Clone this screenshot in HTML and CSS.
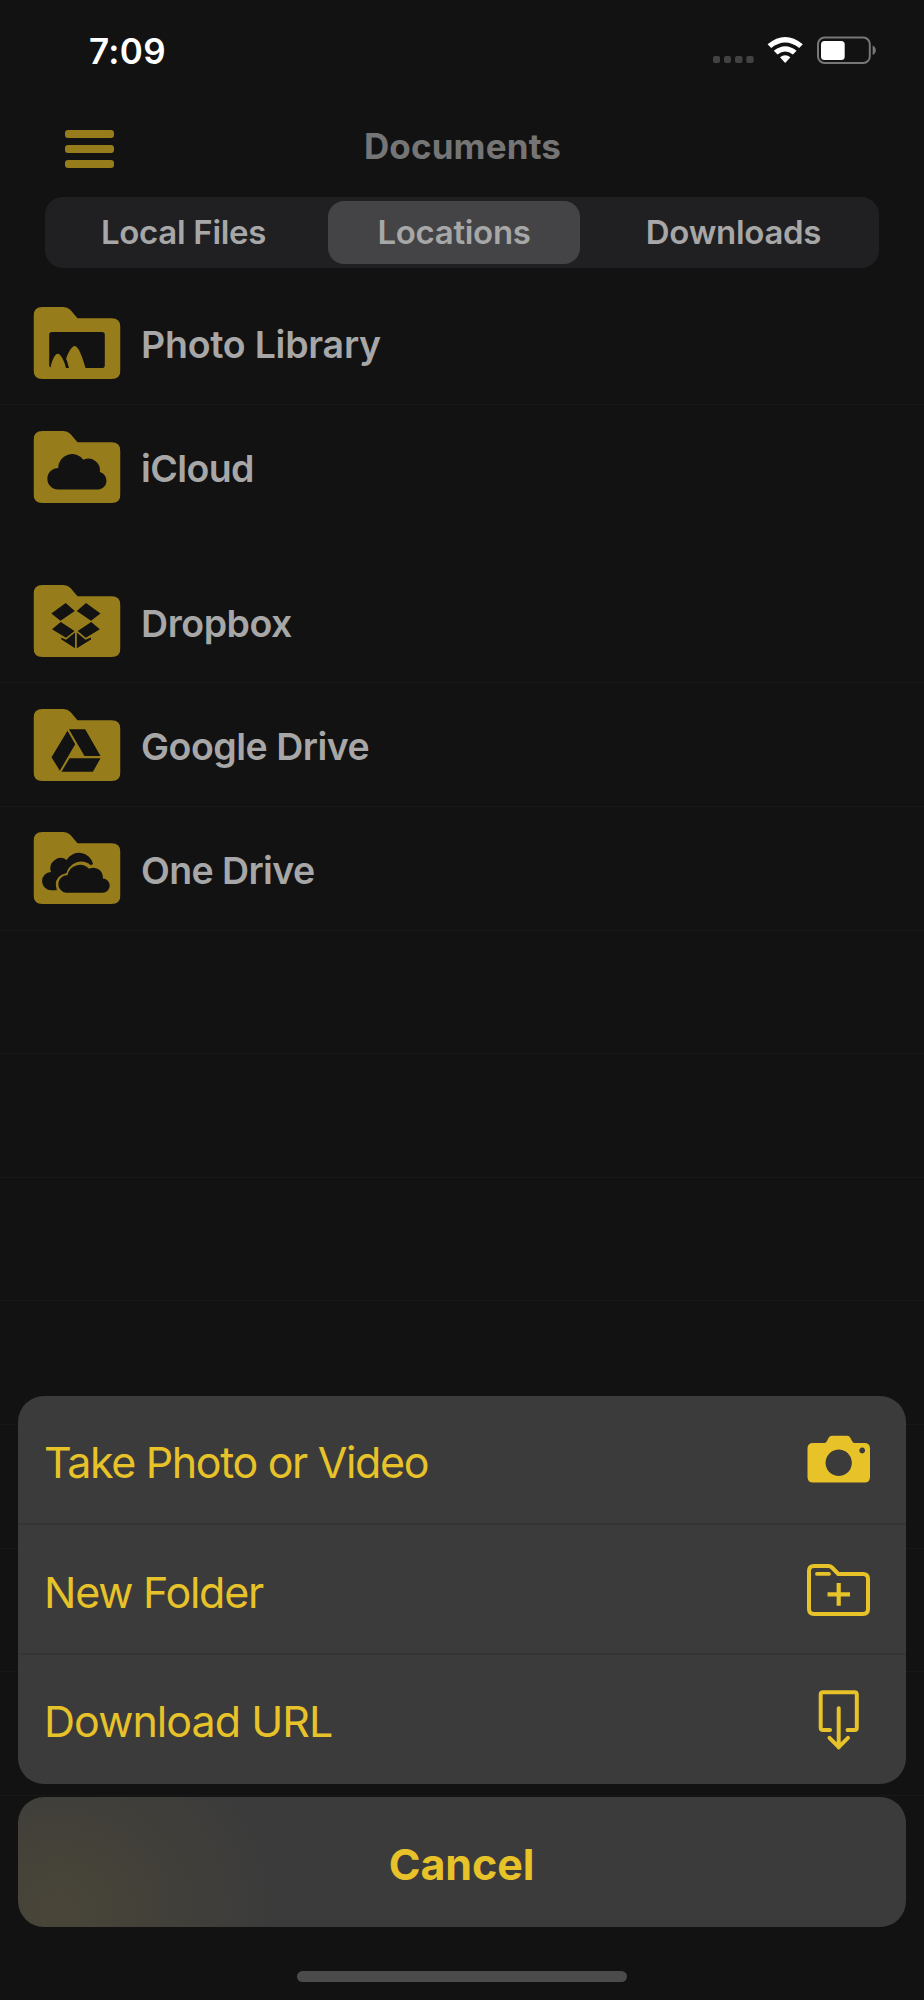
FILE: index.html
```html
<!DOCTYPE html>
<html lang="en">
<head>
<meta charset="utf-8">
<title>Documents</title>
<link rel="stylesheet" href="styles.css">
</head>
<body>
<svg class="defs" width="0" height="0" aria-hidden="true">
  <symbol id="folder" viewBox="0 0 87 72">
    <path d="M9 0H30Q34 0 37 3L44 11.300H78Q87 11.300 87 20.300V63Q87 72 78 72H9Q0 72 0 63V9Q0 0 9 0Z"/>
  </symbol>
</svg>
<div class="screen">
  <header class="status">
    <span class="time">7:09</span>
    <svg class="status-icons" viewBox="0 0 166 30">
      <g fill="#424242">
        <rect x="1" y="21" width="7" height="7" rx="2"/><rect x="12" y="21" width="7" height="7" rx="2"/><rect x="23" y="21" width="7.500" height="7" rx="2"/><rect x="34.200" y="21" width="7.500" height="7" rx="2"/>
      </g>
      <g fill="#fff">
        <path d="M55.600 9.300Q73.200-5.300 90.800 9.300L87.200 13.100Q73.200 2.100 59.200 13.100Z"/>
        <path d="M61.800 15.800Q73.200 6.600 84.600 15.800L80.900 19.600Q73.200 13.600 65.500 19.600Z"/>
        <path d="M68 22.300Q73.200 18.300 78.400 22.300L73.200 28Z"/>
        <rect x="109" y="6" width="23.700" height="19" rx="3.500"/>
      </g>
      <rect x="106" y="2.600" width="51.800" height="25.300" rx="6.500" fill="none" stroke="#777" stroke-width="2"/>
      <path d="M160.600 10.500Q163.800 12 163.800 15.300T160.600 20.100Z" fill="#777"/>
    </svg>
  </header>
  <nav class="bar">
    <div class="menu"><i></i><i></i><i></i></div>
    <h1 class="title">Documents</h1>
  </nav>
  <div class="segments">
    <div class="segment first"><span>Local Files</span></div>
    <div class="segment selected"><span>Locations</span></div>
    <div class="segment"><span>Downloads</span></div>
  </div>
  <main class="list">
    <section class="group">
      <div class="row">
        <svg class="icon" viewBox="0 0 87 72"><use href="#folder"/>
          <path class="cut" d="M18.500 25H68.500Q71.300 25 71.300 27.800V58.200Q71.300 61 68.500 61H52C49 50 45 39 41.200 39C38.300 39 34.300 46 32.600 52C34 54 34.500 58 35.500 61H32.500C30.500 53 27 46.800 24.300 46.800C21 46.800 18.500 54 17 60.600Q15.700 60 15.700 58.200V27.800Q15.700 25 18.500 25Z"/></svg>
        <span class="label l-photo">Photo Library</span>
      </div>
      <div class="row">
        <svg class="icon" viewBox="0 0 87 72"><use href="#folder"/>
          <path class="cut" d="M24.500 58.500A10.750 10.750 0 0 1 24.700 37A14 14 0 0 1 50 28.700A11.600 11.600 0 0 1 66.300 41A8.900 8.900 0 0 1 64.800 58.500Z"/></svg>
        <span class="label">iCloud</span>
      </div>
    </section>
    <section class="group">
      <div class="row">
        <svg class="icon" viewBox="0 0 87 72"><use href="#folder"/>
          <path class="cut" d="M17.800 28.500L32.200 18L41.300 26L27 35.700ZM43.300 26L52.500 18L67 28.500L57.500 35.700ZM18.500 44.300L27.300 37L41 46L32.500 52.800ZM44.200 46L57.700 37L66.300 44.300L52.300 52.800ZM27.300 52.500L32.600 54.700L41.500 47.500V63.300L28 54.500ZM43.300 47.500L52 54.700L57.500 52.500V54.500L43.300 63.300Z"/></svg>
        <span class="label l-dropbox">Dropbox</span>
      </div>
      <div class="row">
        <svg class="icon" viewBox="0 0 87 72"><use href="#folder"/>
          <path class="cut" d="M35.400 20.200H51.700L67 47H51ZM34 21.800L41.700 35.200L26.300 61.700L18 48.200ZM36 49.300H67L59.400 62.700H28Z"/></svg>
        <span class="label l-google">Google Drive</span>
      </div>
      <div class="row">
        <svg class="icon" viewBox="0 0 87 72"><use href="#folder"/>
          <path class="cut" d="M18 58.300A9.200 9.200 0 0 1 17.500 39.900A10.300 10.300 0 0 1 33.200 28A14.300 14.300 0 0 1 59.600 32L57.300 33.300C49.500 26 36.500 30 33 41Q22 43.500 22.300 53L23.300 58.300Z"/>
          <path class="cut" d="M32.500 60.800A8.790 8.790 0 0 1 34 43.300A12.600 12.600 0 0 1 55.500 36.700A9.700 9.700 0 0 1 69.300 46.600A7.100 7.100 0 0 1 69 60.800Z"/></svg>
        <span class="label">One Drive</span>
      </div>
      <div class="row"></div><div class="row"></div><div class="row"></div><div class="row"></div>
      <div class="row"></div><div class="row"></div><div class="row"></div>
    </section>
  </main>
  <div class="overlay">
    <div class="sheet">
      <div class="action"><span class="a-photo">Take Photo or Video</span>
        <svg viewBox="0 0 64 60" class="glyph"><path fill="#e7c229" fill-rule="evenodd" d="M6 8H17.500Q19 8 20 6L21.500 3Q22.700.7 25 .7H40Q42.300.7 43.500 3L45 6Q46 8 47.500 8H57.500Q63 8 63 13.500V42Q63 47.500 57.500 47.500H6Q.5 47.500.5 42V13.500Q.5 8 6 8ZM31.700 14.600a13.200 13.200 0 1 0 .01 0ZM55.200 12.600a2.900 2.900 0 1 0 .01 0Z"/></svg>
      </div>
      <div class="action"><span class="a-folder">New Folder</span>
        <svg viewBox="0 0 64 60" class="glyph line"><path stroke-width="4" d="M7 1H21.500Q23.500 1 25 2.500L31.300 9H56Q61 9 61 14V44Q61 49 56 49H7Q2 49 2 44V6Q2 1 7 1Z"/><path stroke-width="3.800" d="M10 8.900H22"/><path class="plus" stroke-width="4.200" d="M31.700 18V40.700M20.500 29.300H43"/></svg>
      </div>
      <div class="action"><span class="a-url">Download URL</span>
        <svg viewBox="0 0 64 60" class="glyph line"><path stroke-width="4" d="M23 36H16Q13.700 36 13.700 33.700V.5Q13.700-1.800 16-1.800H47.500Q49.800-1.800 49.800.5V33.700Q49.800 36 47.500 36H40.500"/><path stroke-width="4" d="M31.700 14.300V53.500M22.500 43.800L31.700 53.200L41 43.800"/></svg>
      </div>
    </div>
    <div class="sheet cancel"><span>Cancel</span></div>
    <div class="home"></div>
  </div>
</div>
</body>
</html>
```
FILE: styles.css
```css
* { box-sizing: border-box; }
body { margin: 0; background: #121212; font-family: Inter, "Noto Sans", sans-serif; }
.defs { display: block; }
.screen { position: relative; width: 924px; height: 2000px; overflow: hidden; background: #121212; white-space: nowrap; }
.status { display: flex; justify-content: space-between; height: 108px; padding: 35px 46px 0 89px; }
.time { color: #fff; font-size: 35px; font-weight: 600; line-height: 32px; letter-spacing: 0.300px; }
.status-icons { width: 166px; height: 30px; }
.bar { display: grid; grid-template-columns: 65px 1fr 65px; height: 89px; }
.menu { grid-column: 2; grid-row: 1; display: flex; flex-direction: column; gap: 7px; padding-top: 21.500px; width: 49px; }
.menu i { height: 8px; border-radius: 3px; background: #967c1b; }
.title { grid-column: 2; grid-row: 1; margin: 18px 0 0 1px; justify-self: center; color: #757575; font-size: 35px; font-weight: 700; line-height: 40px; letter-spacing: 0.150px; }
.segments { display: grid; grid-template-columns: 279px 260px 291px; width: 834px; height: 70.700px; margin-left: 45px; border-radius: 18px; background: #202022; padding: 4px; }
.segment { display: flex; align-items: center; justify-content: center; color: #a7a7a7; font-size: 33px; font-weight: 600; line-height: 40px; letter-spacing: -0.300px; }
.first { padding-right: 10px; }
.selected { background: #444446; border-radius: 16px; width: 252px; }
.list { padding-top: 14px; }
.group { margin-bottom: 31px; }
.row { display: flex; align-items: center; gap: 21px; height: 123.600px; padding: 0 0 0 33px; border-bottom: 1px solid #181818; }
.group:first-child .row:last-child { border-bottom-color: transparent; }
.icon { width: 87px; height: 72px; fill: #967c1b; transform: translateX(0.500px); }
.cut { fill: #121212; }
.label { color: #a7a7a7; font-size: 37.500px; font-weight: 600; line-height: 46px; padding-top: 5px; letter-spacing: -0.600px; }
.l-photo { letter-spacing: -0.250px; }
.l-dropbox { letter-spacing: -0.450px; }
.l-google { letter-spacing: -0.500px; }
.overlay { position: absolute; left: 18px; right: 18px; bottom: 0; height: 604.300px; display: flex; flex-direction: column; }
.sheet { border-radius: 26px; background: #3b3b3b; overflow: hidden; color: #e7c229; font-size: 43px; }
.action { height: 129.500px; display: flex; align-items: center; justify-content: space-between; padding: 6px 35px 0 26px; border-bottom: 2px solid #353535; }
.action:last-child { border-bottom-color: transparent; }
.a-photo { letter-spacing: -1.370px; }
.a-folder { letter-spacing: -1.250px; }
.a-url { letter-spacing: -0.950px; }
.glyph { width: 64px; height: 60px; margin-top: 6px; overflow: visible; }
.line { fill: none; stroke: #e7c229; stroke-linecap: round; stroke-linejoin: round; }
.plus { stroke-linecap: butt; }
.cancel { display: flex; align-items: center; justify-content: center; height: 129.400px; margin-top: 13px; padding: 4px 1px 0 0; font-weight: 700; letter-spacing: -0.100px; background: radial-gradient(ellipse 215px 190px at 40px 112px, #494538, #3b3b3b) #3b3b3b; }
.home { width: 330px; height: 11px; border-radius: 5.500px; background: #4b4b4b; margin: 44.300px auto 0; }
```
